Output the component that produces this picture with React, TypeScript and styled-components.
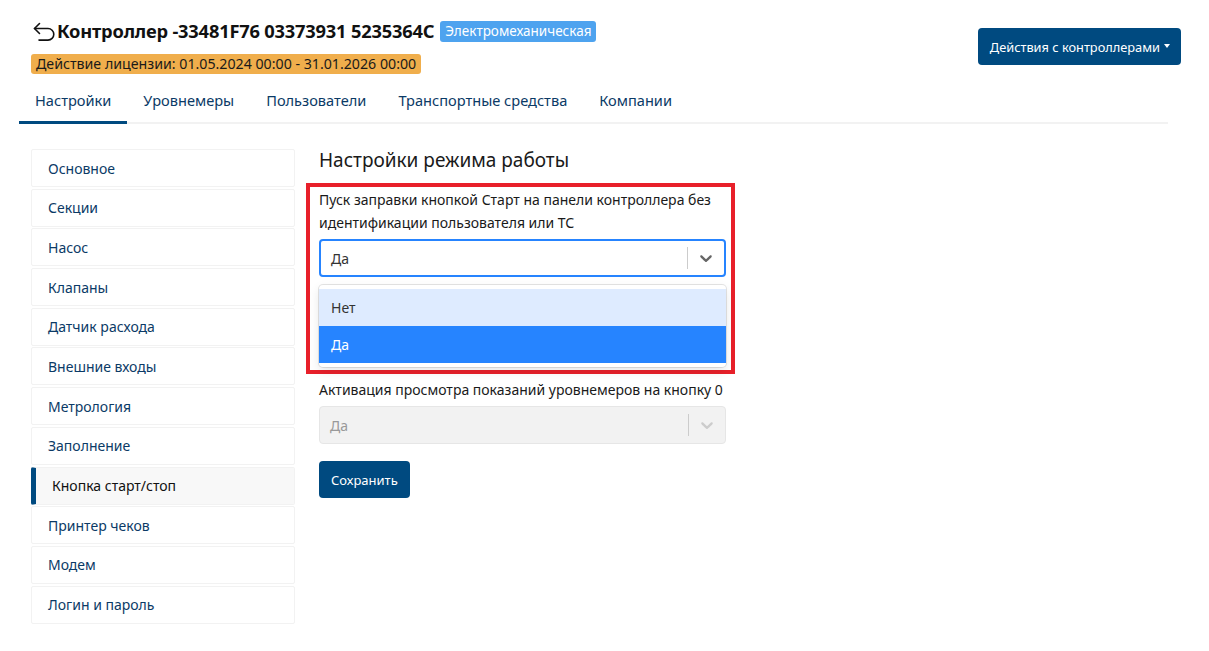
import React from 'react';
import styled, { createGlobalStyle } from 'styled-components';

const GlobalStyle = createGlobalStyle`
  body {
    margin: 0;
    background: #fff;
    font-family: 'Noto Sans', 'Open Sans', sans-serif;
    color: #212529;
  }
  * { box-sizing: border-box; }
`;

const menuItems = [
  'Основное',
  'Секции',
  'Насос',
  'Клапаны',
  'Датчик расхода',
  'Внешние входы',
  'Метрология',
  'Заполнение',
  'Кнопка старт/стоп',
  'Принтер чеков',
  'Модем',
  'Логин и пароль',
];

const tabs = ['Настройки', 'Уровнемеры', 'Пользователи', 'Транспортные средства', 'Компании'];

const Chevron = ({ color }: { color: string }) => (
  <svg width="20" height="20" viewBox="0 0 20 20" fill={color}>
    <path d="M4.516 7.548c0.436-0.446 1.043-0.481 1.576 0l3.908 3.747 3.908-3.747c0.533-0.481 1.141-0.446 1.574 0 0.436 0.445 0.408 1.197 0 1.615-0.406 0.418-4.695 4.502-4.695 4.502-0.217 0.223-0.502 0.335-0.787 0.335s-0.57-0.112-0.789-0.335c0 0-4.287-4.084-4.695-4.502s-0.436-1.17 0-1.615z" />
  </svg>
);

const BackIcon = () => (
  <svg width="23" height="20" viewBox="0 0 23 20" fill="none" stroke="#111" strokeWidth="1.6" strokeLinecap="round" strokeLinejoin="round">
    <path d="M6.5 1.5 1.5 6.5l5 5" />
    <path d="M1.5 6.5H15a5.8 5.8 0 0 1 0 11.6H6" />
  </svg>
);

const App = () => {
  return (
    <Page>
      <GlobalStyle />
      <Header>
        <div>
          <TitleRow>
            <BackIcon />
            <h1>Контроллер -33481F76 03373931 5235364C</h1>
            <TypeBadge>Электромеханическая</TypeBadge>
          </TitleRow>
          <License>Действие лицензии: 01.05.2024 00:00 - 31.01.2026 00:00</License>
        </div>
        <ActionsButton>
          Действия с контроллерами
          <Caret />
        </ActionsButton>
      </Header>

      <Tabs>
        {tabs.map((t, i) => (
          <Tab key={t} $active={i === 0}>
            {t}
          </Tab>
        ))}
      </Tabs>

      <Body>
        <SideMenu>
          {menuItems.map((m) => (
            <MenuItem key={m} $active={m === 'Кнопка старт/стоп'}>
              {m}
            </MenuItem>
          ))}
        </SideMenu>

        <Content>
          <h2>Настройки режима работы</h2>
          <Highlight>
            <Label>Пуск заправки кнопкой Старт на панели контроллера без идентификации пользователя или ТС</Label>
            <Select $focused>
              <span>Да</span>
              <Indicators>
                <Sep />
                <Chevron color="#666" />
              </Indicators>
            </Select>
            <Menu>
              <Option>Нет</Option>
              <Option $selected>Да</Option>
            </Menu>
          </Highlight>
          <Label>Активация просмотра показаний уровнемеров на кнопку 0</Label>
          <Select $disabled>
            <span>Да</span>
            <Indicators>
              <Sep />
              <Chevron color="#ccc" />
            </Indicators>
          </Select>
          <SaveButton>Сохранить</SaveButton>
        </Content>
      </Body>
    </Page>
  );
};

export default App;

const Page = styled.div`
  width: 1209px;
  height: 651px;
  padding: 0 28px 0 19px;
  overflow: hidden;
`;

const Header = styled.div`
  display: flex;
  justify-content: space-between;
  align-items: flex-start;
  padding: 19px 0 0 14px;
`;

const TitleRow = styled.div`
  display: flex;
  align-items: center;
  gap: 1px;
  margin-bottom: 9px;

  > svg {
    margin-top: 1px;
  }

  > h1 {
    margin: 0 5px 0 0;
    font-size: 18.3px;
    font-weight: 700;
    letter-spacing: -0.2px;
    color: #111;
    line-height: 24px;
  }
`;

const TypeBadge = styled.span`
  background: #4ea3ef;
  color: #fff;
  font-size: 13.5px;
  padding: 2px 5px;
  border-radius: 3px;
  line-height: 17px;
`;

const License = styled.span`
  display: inline-block;
  margin-left: -2px;
  background: #f0ae4c;
  color: #1a1a1a;
  font-size: 14.2px;
  padding: 1px 5px;
  border-radius: 3px;
  line-height: 18px;
`;

const ActionsButton = styled.button`
  margin-top: 9px;
  height: 37px;
  padding: 0 11px 0 12px;
  background: #004a80;
  color: #fff;
  border: none;
  border-radius: 4px;
  font-family: inherit;
  font-size: 12.8px;
  font-weight: 400;
  display: flex;
  align-items: center;
  gap: 4px;
`;

const Caret = styled.span`
  width: 0;
  height: 0;
  border-left: 3.5px solid transparent;
  border-right: 3.5px solid transparent;
  border-top: 4px solid #fff;
  margin-top: -2px;
`;

const Tabs = styled.div`
  display: flex;
  margin: 13px 0 0 0;
  border-bottom: 2px solid #f2f2f2;
  width: 1149px;
`;

const Tab = styled.div<{ $active?: boolean }>`
  padding: 3px 16px 0 16px;
  height: 37px;
  display: flex;
  align-items: flex-start;
  font-size: 14.6px;
  color: #0b3a66;
  margin-bottom: -2px;
  border-bottom: 3px solid ${(p) => (p.$active ? '#004a80' : 'transparent')};
`;

const Body = styled.div`
  display: flex;
  padding: 25px 0 0 12px;
  gap: 24px;
`;

const SideMenu = styled.div`
  width: 264px;
  display: flex;
  flex-direction: column;
  gap: 1.7px;
`;

const MenuItem = styled.div<{ $active?: boolean }>`
  height: 38px;
  display: flex;
  align-items: center;
  padding-left: 16px;
  border: 1px solid #f2f2f2;
  border-left: ${(p) => (p.$active ? '5px solid #004a80' : '1px solid #f2f2f2')};
  background: ${(p) => (p.$active ? '#f8f8f8' : '#fff')};
  color: ${(p) => (p.$active ? '#111' : '#0b3a66')};
  font-size: 14px;
  border-radius: 2px;
`;

const Content = styled.div`
  width: 407px;
  display: flex;
  flex-direction: column;

  > h2 {
    margin: -1px 0 11px 0;
    font-size: 19px;
    font-weight: 400;
    color: #1a1a1a;
    line-height: 24px;
  }
`;

const Highlight = styled.div`
  margin: 0 -9px 4px -13px;
  border: 4px solid #e8202a;
  padding: 1px 5px 0 9px;
  display: flex;
  flex-direction: column;
`;

const Label = styled.div`
  font-size: 14px;
  line-height: 23px;
  color: #1a1a1a;
  margin-bottom: 5px;
`;

const Select = styled.div<{ $focused?: boolean; $disabled?: boolean }>`
  height: 38px;
  display: flex;
  align-items: center;
  justify-content: space-between;
  padding-left: 10px;
  border-radius: 4px;
  font-size: 14px;
  border: ${(p) => (p.$focused ? '2px solid #2684ff' : '1px solid #e6e6e6')};
  background: ${(p) => (p.$disabled ? '#f2f2f2' : '#fff')};
  color: ${(p) => (p.$disabled ? '#999' : '#333')};
  margin-bottom: ${(p) => (p.$disabled ? '17px' : '0')};
`;

const Indicators = styled.div`
  display: flex;
  align-items: center;
  height: 100%;
  padding-right: 8px;
`;

const Sep = styled.span`
  width: 1px;
  height: 22px;
  background: #ccc;
  margin-right: 8px;
`;

const Menu = styled.div`
  margin: 8px 0 3px 0;
  border-radius: 4px;
  padding: 4px 0;
  box-shadow: 0 0 0 1px rgba(0, 0, 0, 0.1), 0 4px 11px rgba(0, 0, 0, 0.1);
  background: #fff;
`;

const Option = styled.div<{ $selected?: boolean }>`
  height: 37px;
  display: flex;
  align-items: center;
  padding-left: 12px;
  font-size: 14px;
  background: ${(p) => (p.$selected ? '#2684ff' : '#deebff')};
  color: ${(p) => (p.$selected ? '#fff' : '#333')};
`;

const SaveButton = styled.button`
  align-self: flex-start;
  height: 37px;
  padding: 0 12px;
  background: #004a80;
  color: #fff;
  border: none;
  border-radius: 4px;
  font-family: inherit;
  font-size: 13px;
  font-weight: 400;
`;
